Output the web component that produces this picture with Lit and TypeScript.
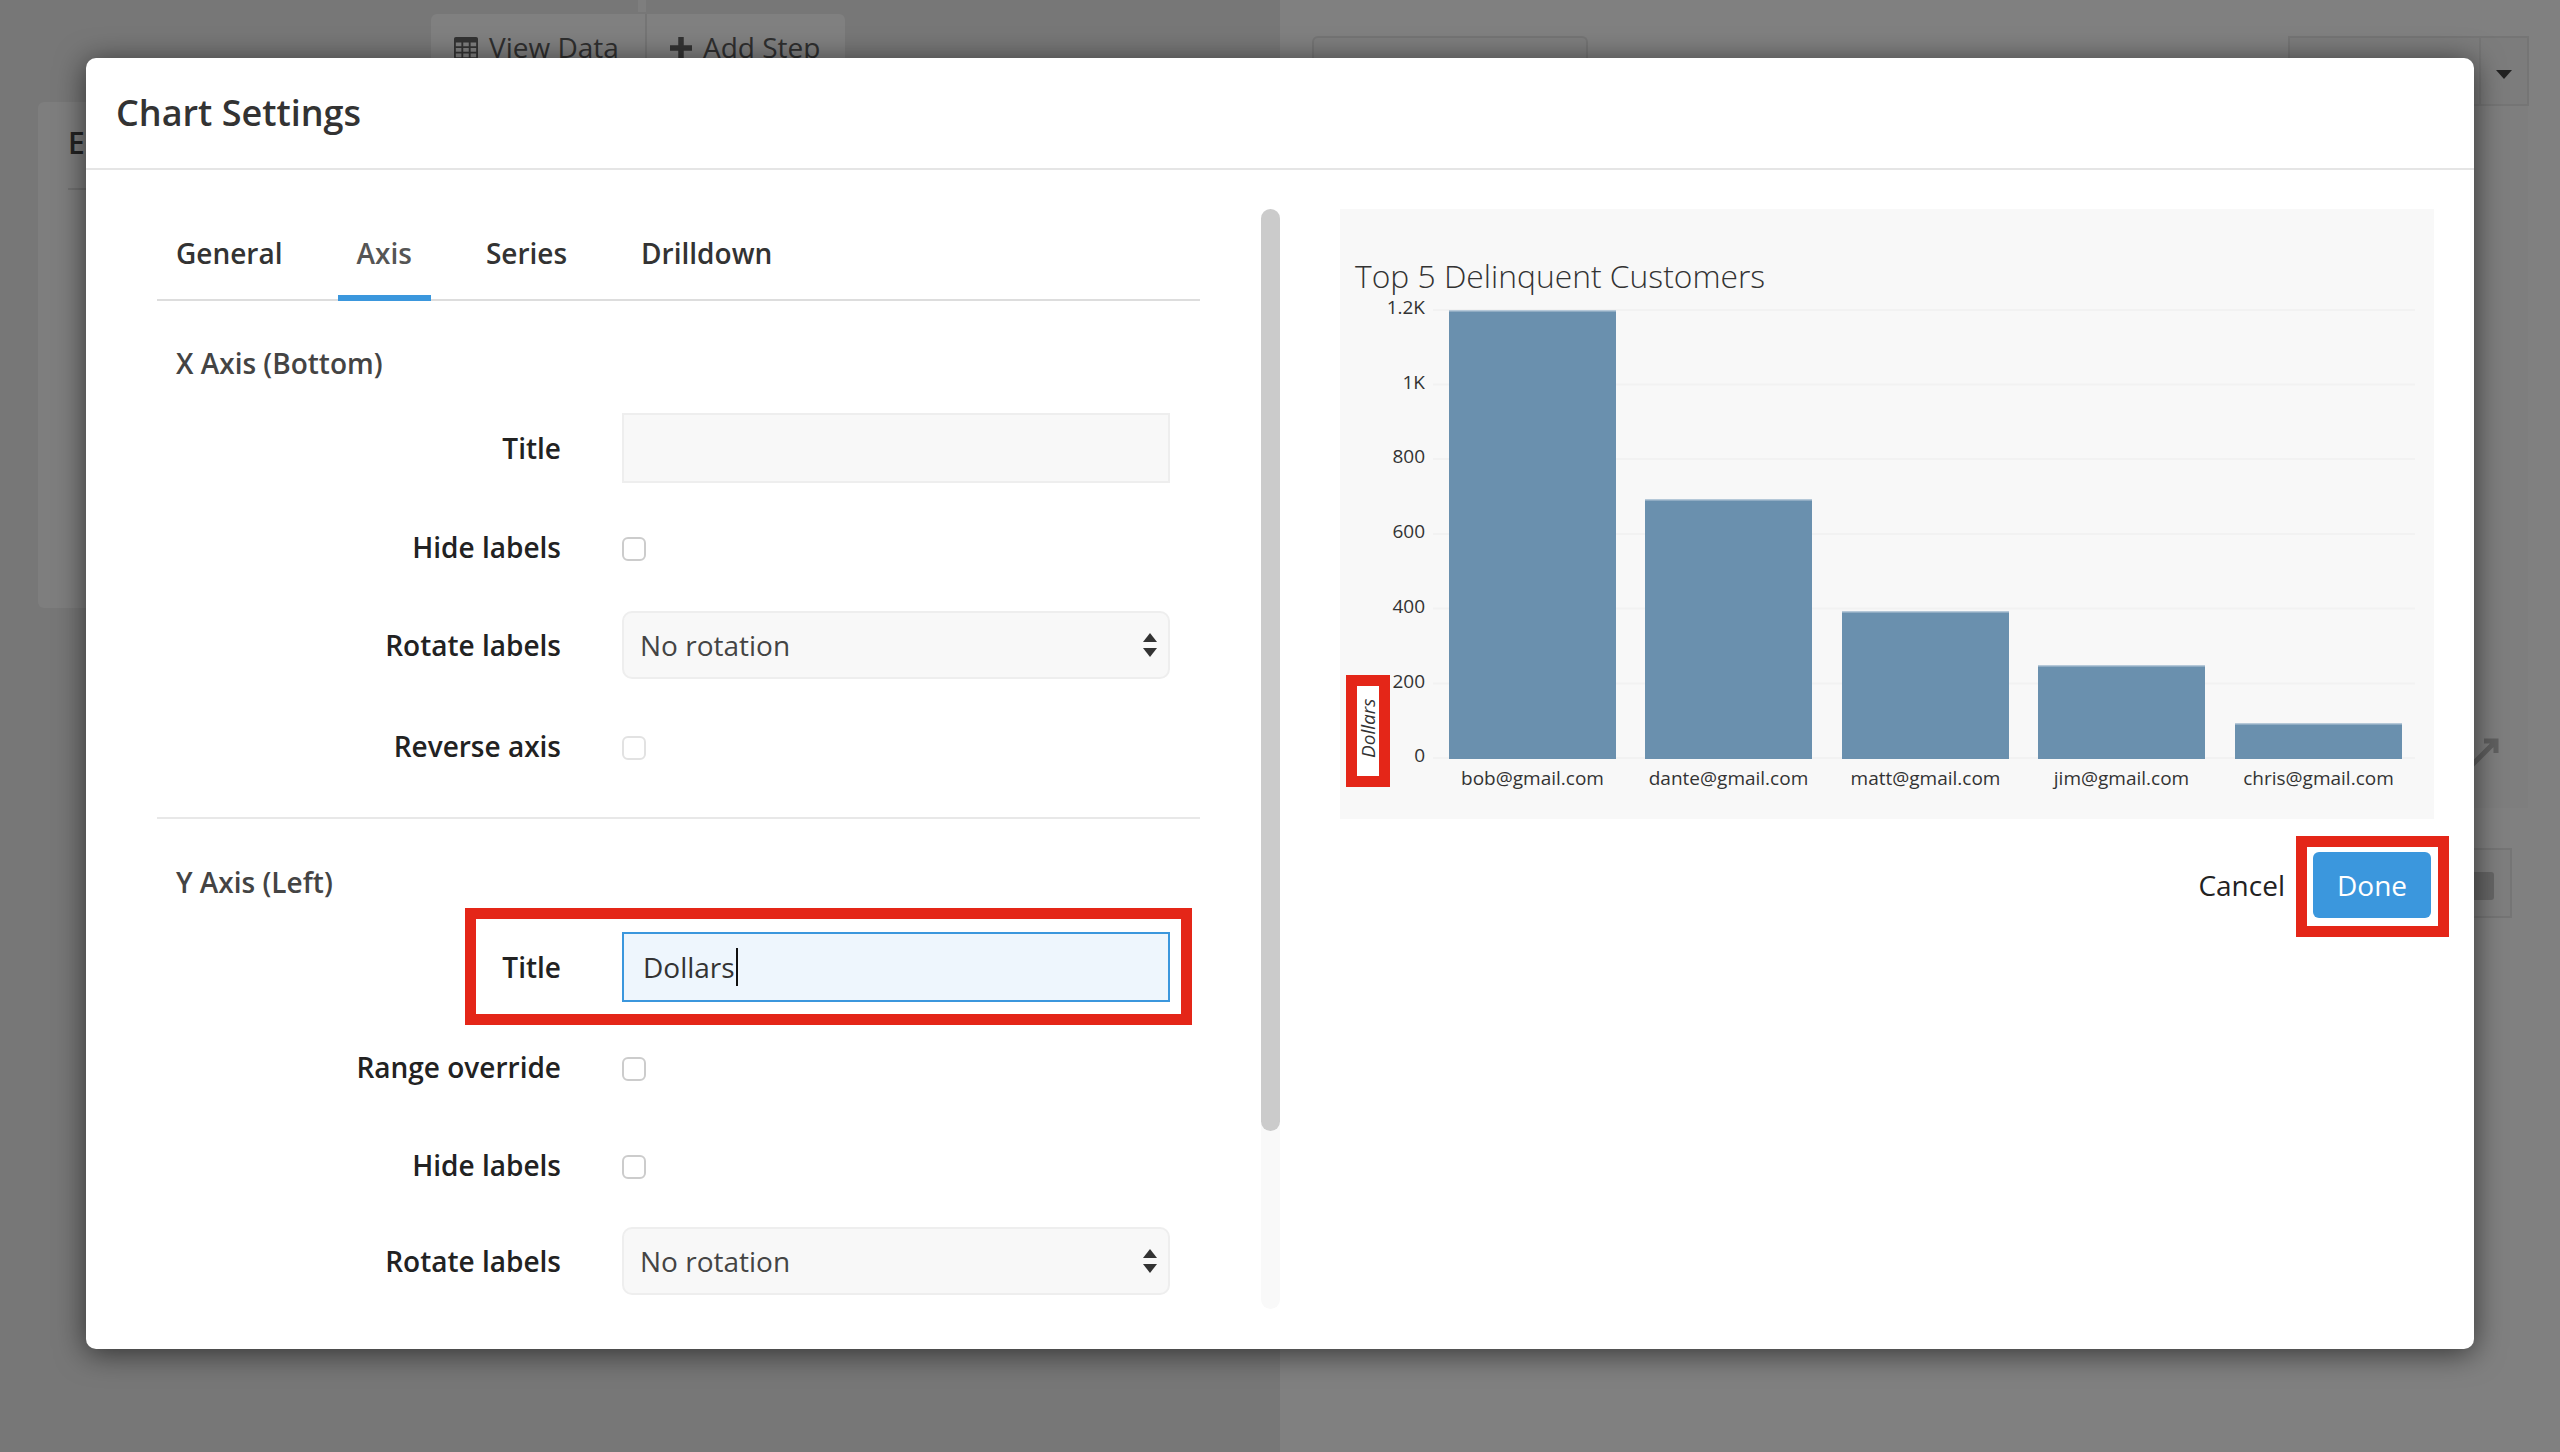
import { LitElement, html, css, svg } from "lit";
import { customElement } from "lit/decorators.js";

const FONT = css`"Open Sans", "Noto Sans", sans-serif`;

@customElement("chart-preview")
class ChartPreview extends LitElement {
  static styles = css`
    :host { display: block; height: 610px; background: #f8f8f8; }
    svg { display: block; }
    .title { font: 300 31.8px ${FONT}; fill: #333; }
    .tick { font: 400 19px ${FONT}; fill: #333; }
    .axis { font: italic 400 19px ${FONT}; fill: #333; }
  `;
  render() {
    const ticks = [["1.2K", 310], ["1K", 384.5], ["800", 459], ["600", 534], ["400", 608.5], ["200", 683.5], ["0", 758]] as const;
    const bars = [
      ["bob@gmail.com", 1449, 310],
      ["dante@gmail.com", 1645, 499],
      ["matt@gmail.com", 1842, 611],
      ["jim@gmail.com", 2038, 665],
      ["chris@gmail.com", 2235, 723],
    ] as const;
    const ox = 1340, oy = 209;
    return html`<svg width="1094" height="610" viewBox="${ox} ${oy} 1094 610">
      <text class="title" x="1355" y="288">Top 5 Delinquent Customers</text>
      ${ticks.map(([t, y]) => svg`
        <line x1="1433" x2="2415" y1=${y} y2=${y} stroke="#f2f2f2" stroke-width="2"></line>
        <text class="tick" x="1425" y=${y + 4} text-anchor="end">${t}</text>`)}
      ${bars.map(([l, x, top]) => svg`
        <rect x=${x} y=${top} width="167" height=${759 - top} fill="#6a90ae"></rect>
        <rect x=${x} y=${top} width="167" height="1.5" fill="#b5c8d8"></rect>
        <text class="tick" x=${x + 83.5} y="785" text-anchor="middle">${l}</text>`)}
      <rect x="1357" y="685" width="22" height="92" fill="#fff"></rect>
      <text class="axis" transform="translate(1375 758) rotate(-90)">Dollars</text>
    </svg>`;
  }
}

@customElement("app-root")
class AppRoot extends LitElement {
  static styles = css`
    :host { display: block; width: 2560px; height: 1452px; position: relative; overflow: hidden; font-family: ${FONT}; color: #333; }
    .page { display: grid; grid-template-columns: 1280px 1280px; height: 1452px; }
    .bg-left { background: #777; position: relative; }
    .bg-right { background: #808080; position: relative; }
    .ghost { position: absolute; box-sizing: border-box; background: #7e7e7e; border: 2px solid #757575; border-radius: 6px; color: #2f2f2f; font-size: 28px; }
    .tb { left: 431px; top: 14px; width: 414px; height: 60px; display: flex; align-items: stretch; border: none; background: #808080; white-space: nowrap; }
    .tb span { display: flex; align-items: flex-start; gap: 11px; padding: 13px 0 0 23px; line-height: 40px; box-sizing: border-box; }
    .tb span:first-child { width: 214px; }
    .tb span + span { border-left: 2px solid #757575; }
    .tb svg { margin-top: 9px; flex: none; }
    .tbar { left: 638px; top: 0; width: 8px; height: 12px; background: #7e7e7e; border: none; border-radius: 0; }
    .lcard { left: 38px; top: 102px; width: 100px; height: 506px; font-size: 30px; background: #7e7e7e; border: none; }
    .lcard b { position: absolute; left: 30px; top: 20px; font-weight: 600; color: #222; }
    .lcard i { position: absolute; left: 30px; right: 0; top: 86px; height: 2px; background: #707070; }
    .rb1 { left: 32px; top: 36px; width: 276px; height: 60px; }
    .rb2 { left: 1008px; top: 36px; width: 241px; height: 70px; background: #7c7c7c; border-radius: 0; }
    .rb2 i { position: absolute; left: 189px; top: 0; bottom: 0; width: 2px; background: #757575; }
    .caret { position: absolute; left: 1216px; top: 70px; border-left: 8px solid transparent; border-right: 8px solid transparent; border-top: 9px solid #222; }
    .panel { position: absolute; left: 1100px; top: 106px; width: 148px; height: 702px; background: #7e7e7e; }
    .expand { position: absolute; left: 1188px; top: 738px; }
    .rb3 { left: 1150px; top: 848px; width: 82px; height: 70px; background: #7e7e7e; border-radius: 0; }
    .rb3 i { position: absolute; left: 20px; top: 22px; width: 42px; height: 28px; background: #666; border-radius: 3px; }
    .modal { position: absolute; left: 86px; top: 58px; width: 2388px; height: 1291px; box-sizing: border-box; background: #fff; border-radius: 10px; box-shadow: 0 4px 30px rgba(0,0,0,.6); display: flex; flex-direction: column; overflow: hidden; }
    .head { height: 112px; box-sizing: border-box; border-bottom: 2px solid #e5e5e5; padding: 0 30px 2px; display: flex; align-items: center; font-size: 36px; font-weight: 600; color: #333; flex: none; }
    .body { flex: 1; display: grid; grid-template-columns: 1254px 1fr; padding-top: 39px; min-height: 0; }
    .left { display: grid; grid-template-columns: 1104px 19px; column-gap: 0; padding-left: 71px; height: 1100px; }
    .form { min-width: 0; }
    .tabs { display: flex; height: 92px; border-bottom: 2px solid #ddd; box-sizing: border-box; width: 1043px; }
    .tab { padding: 0 19px; margin-right: 36px; font-size: 28px; font-weight: 600; height: 92px; box-sizing: border-box; line-height: 88px; color: #333; }
    .tab.on { color: #555; border-bottom: 6px solid #3b97dd; }
    .section { width: 1043px; padding: 37px 0 0; }
    .section + .section { border-top: 2px solid #e8e8e8; margin-top: 4px; padding-top: 38px; }
    h3 { margin: 0; padding-left: 19px; height: 50px; line-height: 50px; font-size: 28px; font-weight: 600; color: #444; }
    .rows { display: flex; flex-direction: column; padding-top: 25px; }
    .row { display: grid; grid-template-columns: 404px 548px; column-gap: 61px; align-items: center; justify-content: start; }
    .row label { text-align: right; font-size: 28px; font-weight: 600; color: #222; }
    .input { box-sizing: border-box; height: 70px; background: #f8f8f8; border: 2px solid #eee; font-size: 28px; display: flex; align-items: center; padding-left: 19px; }
    .input.focus { background: #eef6fd; border-color: #3b97dd; }
    .input.focus u { display: inline-block; width: 2px; height: 38px; background: #111; margin-left: 1px; }
    .select { box-sizing: border-box; height: 68px; background: #f8f8f8; border: 2px solid #eee; border-radius: 10px; font-size: 28px; font-weight: 400; color: #444; display: flex; align-items: center; justify-content: space-between; padding: 0 11px 0 16px; }
    .updown { display: grid; gap: 6px; }
    .updown i { display: block; border-left: 7px solid transparent; border-right: 7px solid transparent; }
    .updown .u { border-bottom: 9px solid #333; }
    .updown .d { border-top: 9px solid #333; }
    .cell { padding-top: 4px; }
    .check { box-sizing: border-box; width: 24px; height: 24px; border: 2px solid #ccc; border-radius: 6px; background: #fff; }
    .check.faint { border-color: #e2e2e2; }
    .spacer { height: 29px; }
    .scroll { height: 1100px; background: #f9f9f9; border-radius: 10px; }
    .thumb { height: 922px; background: #cbcbcb; border-radius: 10px; }
    .right { padding-right: 40px; }
    .foot { display: flex; justify-content: flex-end; align-items: center; margin-top: 33px; padding-right: 3px; gap: 28px; font-size: 28px; }
    .cancel { color: #222; }
    .done { width: 118px; height: 66px; box-sizing: border-box; background: #3b97dd; color: #fff; border-radius: 6px; display: flex; align-items: center; justify-content: center; font-weight: 500; }
    .red { position: absolute; box-sizing: border-box; border: 11px solid #e42618; pointer-events: none; }
    .r1 { left: 465px; top: 908px; width: 727px; height: 117px; }
    .r2 { left: 1346px; top: 675px; width: 44px; height: 112px; }
    .r3 { left: 2296px; top: 836px; width: 153px; height: 101px; }
  `;

  row(label: string, control: unknown, h: number) {
    return html`<div class="row" style="height:${h}px"><label>${label}</label>${control}</div>`;
  }
  render() {
    const sel = html`<div class="select">No rotation<span class="updown"><i class="u"></i><i class="d"></i></span></div>`;
    const cb = html`<div class="cell"><div class="check"></div></div>`;
    const cbf = html`<div class="cell"><div class="check faint"></div></div>`;
    return html`
      <div class="page">
        <div class="bg-left">
          <div class="ghost tbar"></div>
          <div class="ghost tb">
            <span><svg width="24" height="24" viewBox="0 0 26 24"><path fill="#333" fill-rule="evenodd" d="M2 0h22a2 2 0 0 1 2 2v20a2 2 0 0 1-2 2H2a2 2 0 0 1-2-2V2a2 2 0 0 1 2-2zm0 6v4h6V6zm8 0v4h6V6zm8 0v4h6V6zM2 12v4h6v-4zm8 0v4h6v-4zm8 0v4h6v-4zM2 18v4h6v-4zm8 0v4h6v-4zm8 0v4h6v-4z"/></svg>View Data</span>
            <span><svg width="22" height="24" viewBox="0 0 24 24"><path fill="#333" d="M9 0h6v9h9v6h-9v9H9v-9H0V9h9z"/></svg>Add Step</span>
          </div>
          <div class="ghost lcard"><b>E</b><i></i></div>
        </div>
        <div class="bg-right">
          <div class="ghost rb1"></div>
          <div class="panel"></div>
          <div class="ghost rb2"><i></i></div>
          <div class="caret"></div>
          <div class="ghost rb3"><i></i></div>
          <svg class="expand" width="32" height="32" viewBox="0 0 32 32"><path fill="none" stroke="#606060" stroke-width="5" d="M28 3 2 29M16 3h12v12"/></svg>
        </div>
      </div>
      <div class="modal">
        <div class="head">Chart Settings</div>
        <div class="body">
          <div class="left">
            <div class="form">
              <div class="tabs">
                ${["General", "Axis", "Series", "Drilldown"].map(
                  (t) => html`<div class="tab ${t === "Axis" ? "on" : ""}">${t}</div>`
                )}
              </div>
              <div class="section">
                <h3>X Axis (Bottom)</h3>
                <div class="rows">
                  ${this.row("Title", html`<div class="input"></div>`, 70)}
                  ${this.row("Hide labels", cb, 128)}
                  ${this.row("Rotate labels", sel, 68)}
                  ${this.row("Reverse axis", cbf, 134)}
                </div>
              </div>
              <div class="section">
                <h3>Y Axis (Left)</h3>
                <div class="rows">
                  ${this.row("Title", html`<div class="input focus">Dollars<u></u></div>`, 70)}
                  ${this.row("Range override", cb, 130)}
                  ${this.row("Hide labels", cb, 66)}
                  <div class="spacer"></div>
                  ${this.row("Rotate labels", sel, 68)}
                </div>
              </div>
            </div>
            <div class="scroll"><div class="thumb"></div></div>
          </div>
          <div class="right">
            <chart-preview></chart-preview>
            <div class="foot"><span class="cancel">Cancel</span><div class="done">Done</div></div>
          </div>
        </div>
      </div>
      <div class="red r1"></div>
      <div class="red r2"></div>
      <div class="red r3"></div>
    `;
  }
}
